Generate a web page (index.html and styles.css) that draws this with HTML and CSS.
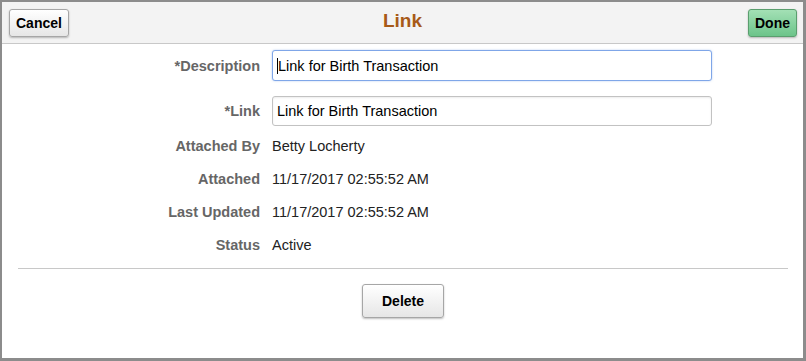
FILE: index.html
```html
<!DOCTYPE html>
<html>
<head>
<meta charset="utf-8">
<link rel="stylesheet" href="styles.css">
</head>
<body>
<div class="dialog">
  <div class="header">
    <button class="btn">Cancel</button>
    <div class="title">Link</div>
    <button class="btn btn-primary">Done</button>
  </div>
  <div class="form">
    <div class="row row-input">
      <label class="label">*Description</label>
      <div class="input focused"><span class="caret"></span>Link for Birth Transaction</div>
    </div>
    <div class="row row-input row-link">
      <label class="label">*Link</label>
      <div class="input">Link for Birth Transaction</div>
    </div>
    <div class="row row-text">
      <span class="label">Attached By</span>
      <span class="value">Betty Locherty</span>
    </div>
    <div class="row row-text">
      <span class="label">Attached</span>
      <span class="value">11/17/2017 02:55:52 AM</span>
    </div>
    <div class="row row-text">
      <span class="label">Last Updated</span>
      <span class="value">11/17/2017 02:55:52 AM</span>
    </div>
    <div class="row row-text">
      <span class="label">Status</span>
      <span class="value">Active</span>
    </div>
  </div>
  <div class="separator"></div>
  <div class="actions">
    <button class="btn btn-delete">Delete</button>
  </div>
</div>
</body>
</html>
```
FILE: styles.css
```css
* { box-sizing: border-box; }
html, body {
  margin: 0;
  padding: 0;
  background: #ffffff;
}
body {
  font-family: Arial, "Liberation Sans", sans-serif;
  font-size: 14px;
  color: #000;
}
.dialog {
  width: 806px;
  height: 361px;
  border-style: solid;
  border-color: #8c8c8c;
  border-width: 2px 3px 3px 2px;
  background: #fff;
  display: flex;
  flex-direction: column;
}
.header {
  height: 42px;
  background: #f3f3f3;
  border-bottom: 1px solid #c8c8c8;
  display: flex;
  align-items: flex-start;
  justify-content: space-between;
  padding: 7px 6px 0 7px;
  position: relative;
}
.title {
  position: absolute;
  left: 0;
  right: 0;
  top: 8px;
  text-align: center;
  font-size: 19px;
  font-weight: bold;
  color: #a75a18;
  pointer-events: none;
}
.btn {
  font-family: Arial, "Liberation Sans", sans-serif;
  font-weight: bold;
  font-size: 14px;
  color: #000;
  height: 28px;
  padding: 0 6px;
  border: 1px solid #a6a6a6;
  border-radius: 3px;
  background: linear-gradient(#ffffff, #e6e6e6);
  box-shadow: 0 1px 2px rgba(0,0,0,0.25);
  cursor: pointer;
}
.btn-primary {
  background: linear-gradient(#a3e0b5, #6cc48a);
  border-color: #5a9e6e;
  width: 49px;
  padding: 0;
}
.form {
  padding-top: 6px;
}
.row {
  display: grid;
  grid-template-columns: 258px 1fr;
  column-gap: 12px;
  align-items: center;
}
.label {
  text-align: right;
  font-weight: bold;
  color: #666666;
  font-size: 14.5px;
}
.row-input {
  height: 31px;
  padding-right: 91px;
}
.row-link {
  margin-top: 15px;
  height: 30px;
}
.input {
  height: 100%;
  border: 1px solid #c2c2c2;
  border-radius: 3px;
  padding: 0 4px;
  display: flex;
  align-items: center;
  color: #000;
  font-size: 14.5px;
  background: #fff;
  box-shadow: inset 0 1px 2px rgba(0,0,0,0.08);
}
.input.focused {
  border-color: #7fa6e8;
  box-shadow: 0 0 2px rgba(100,150,230,0.5);
}
.caret {
  display: inline-block;
  width: 1px;
  height: 16px;
  background: #000;
}
.row-text {
  height: 33px;
}
.row-link + .row-text {
  margin-top: 3px;
}
.value {
  color: #222;
  font-size: 14.5px;
}
.separator {
  height: 1px;
  background: #c8c8c8;
  margin: 7px 15px 0 16px;
}
.actions {
  display: flex;
  justify-content: center;
  padding-top: 15px;
  padding-left: 1px;
}
.btn-delete {
  width: 82px;
  height: 34px;
}
```
